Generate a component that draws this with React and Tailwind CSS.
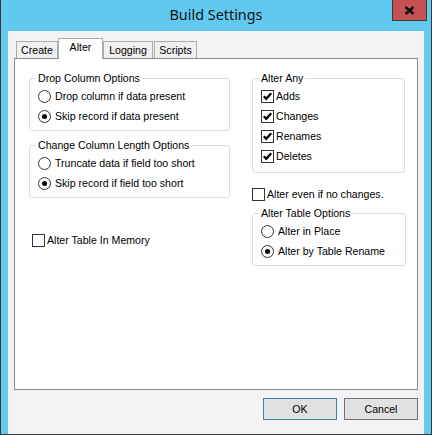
import React from "react";

const ui = "font-['Liberation_Sans',Arial,sans-serif] text-[10.6px] leading-[13px] text-black";

function Radio({ label, checked }) {
  return (
    <div className="flex h-5 items-center">
      <span className="flex h-[13px] w-[13px] items-center justify-center rounded-full border border-[#333333] bg-white">
        {checked && <span className="h-[5px] w-[5px] rounded-full bg-black" />}
      </span>
      <span className="ml-[4px]">{label}</span>
    </div>
  );
}

function Check({ label, checked }) {
  return (
    <div className="flex h-5 items-center">
      <span className="flex h-[13px] w-[13px] items-center justify-center border border-[#333333] bg-white">
        {checked && (
          <svg width="11" height="11" viewBox="0 0 11 11">
            <polyline points="1.8,5.2 4.2,7.8 9.2,2.2" fill="none" stroke="#000" strokeWidth="2.2" />
          </svg>
        )}
      </span>
      <span className="ml-[2px]">{label}</span>
    </div>
  );
}

function Group({ title, children, className = "" }) {
  return (
    <fieldset className={`rounded-[3px] border border-[#d5dfe5] pb-[4px] pl-[8px] pt-[1px] ${className}`}>
      <legend className="-ml-[2px] px-[2px] leading-[13px]">{title}</legend>
      {children}
    </fieldset>
  );
}

function Tab({ label, active, width }) {
  if (active) {
    return (
      <div
        className={`relative z-10 -mb-px flex h-[21px] items-start justify-center border border-b-0 border-[#acacac] bg-white pt-[2px] ${width}`}
      >
        {label}
      </div>
    );
  }
  return (
    <div className={`flex h-[17px] items-start justify-center border border-b-0 border-[#acacac] bg-[#f0f0f0] pt-[2px] ${width}`}>
      {label}
    </div>
  );
}

export default function App() {
  return (
    <div className={`${ui} flex h-[435px] w-[432px] flex-col border-x border-b border-[#3a3a3a] bg-[#62c9ee]`}>
      {/* caption bar */}
      <div className="relative flex h-[31px] shrink-0 items-center justify-center">
        <span className="font-['Noto_Sans',sans-serif] text-[14.4px] leading-none text-[#111]">Build Settings</span>
        <div className="absolute left-[391px] top-0 flex h-[21px] w-[35px] items-center justify-center border border-t-0 border-[#3c3c3c] bg-[#c75050]">
          <svg width="11" height="9" viewBox="0 0 11 9">
            <path d="M1.5 1 L9.5 8 M9.5 1 L1.5 8" stroke="#111" strokeWidth="2.4" />
          </svg>
        </div>
      </div>

      {/* client area */}
      <div className="mx-[7px] flex flex-1 flex-col bg-[#f5f2f5] px-[6px] pb-[7px] pt-[7px]">
        <div className="flex h-[20px] items-end pl-[2px]">
          <Tab label="Create" width="w-[42px]" />
          <Tab label="Alter" active width="w-[45px]" />
          <Tab label="Logging" width="w-[50px]" />
          <Tab label="Scripts" width="w-[43px] ml-px" />
        </div>

        <div className="flex h-[332px] border border-[#898989] bg-white pl-[14px] pt-[13px]">
          {/* left column */}
          <div className="flex w-[201px] flex-col">
            <Group title="Drop Column Options">
              <Radio label="Drop column if data present" />
              <Radio label="Skip record if data present" checked />
            </Group>
            <Group title="Change Column Length Options" className="mt-[8px]">
              <Radio label="Truncate data if field too short" />
              <Radio label="Skip record if field too short" checked />
            </Group>
            <div className="ml-[3px] mt-[32px]">
              <Check label="Alter Table In Memory" />
            </div>
          </div>

          {/* right column */}
          <div className="ml-[22px] flex w-[153px] flex-col">
            <Group title="Alter Any" className="pb-[6px]">
              <Check label="Adds" checked />
              <Check label="Changes" checked />
              <Check label="Renames" checked />
              <Check label="Deletes" checked />
            </Group>
            <div className="mt-[11px]">
              <Check label="Alter even if no changes." />
            </div>
            <Group title="Alter Table Options" className="mt-[3px] w-[154px]">
              <Radio label="Alter in Place" />
              <Radio label="Alter by Table Rename" checked />
            </Group>
          </div>
        </div>

        <div className="mt-[8px] flex justify-end gap-[7px]">
          <button className="flex h-[22px] w-[74px] items-center justify-center border border-[#3c7fb1] bg-[#e1e1e1]">OK</button>
          <button className="flex h-[22px] w-[74px] items-center justify-center border border-[#707070] bg-[#e1e1e1]">Cancel</button>
        </div>
      </div>
    </div>
  );
}
